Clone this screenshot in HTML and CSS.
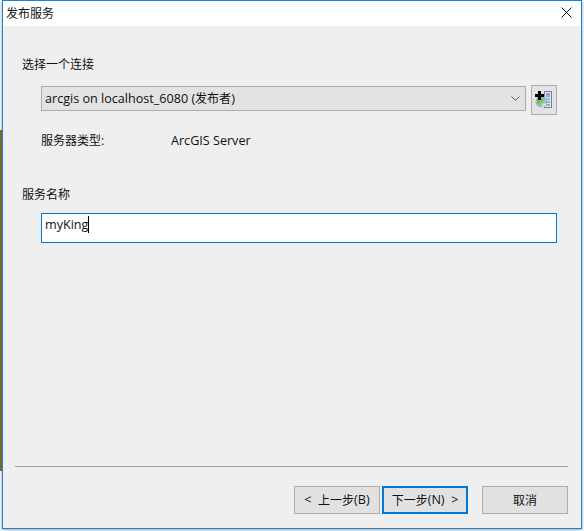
FILE: index.html
```html
<!DOCTYPE html>
<html>

<head>
	<meta http-equiv="Content-Type" content="text/html; charset=utf-8"/>
	<title>发布服务</title>
	<link rel="stylesheet" href="styles.css">
</head>

<body>
<div class="desktop"></div>
<div class="dialog">
	<div class="titlebar">
		<span class="title">发布服务</span>
		<svg class="close" width="11" height="11" viewBox="0 0 11 11">
			<path d="M0.5 0.5 L10.5 10.5 M10.5 0.5 L0.5 10.5" stroke="#111" stroke-width="1" fill="none"/>
		</svg>
	</div>
	<div class="content">
		<div class="label">选择一个连接</div>
		<div class="row">
			<div class="combo">
				<span class="latin">arcgis on localhost_6080 (<span class="cjk">发布者</span>)</span>
				<svg width="9" height="5" viewBox="0 0 9 5">
					<path d="M0.5 0.5 L4.5 4.5 L8.5 0.5" stroke="#555" stroke-width="1" fill="none"/>
				</svg>
			</div>
			<div class="icon-button">
				<svg width="18" height="18" viewBox="0 0 18 18">
					<rect x="9.5" y="0.5" width="7" height="16" fill="#dfe1f2" stroke="#767db0"/>
					<path d="M11 3 H15 M11 5 H15" stroke="#5e6598"/>
					<path d="M11 8 H15 M11 11 H15" stroke="#5aa05a"/>
					<path d="M11 14 H15" stroke="#5e6598"/>
					<circle cx="6.5" cy="10.5" r="6" fill="#8cc0d8"/>
					<path d="M2 8 Q6 5 8 8 Q10 11 6 11 Q5 15 2 13 Z" fill="#8fb84f"/>
					<path d="M7 13 Q10 11 12 13 Q9 17 7 16 Z" fill="#e6dc9a"/>
					<path d="M3 0 H6 V3 H9 V6 H6 V9 H3 V6 H0 V3 H3 Z" fill="#000"/>
				</svg>
			</div>
		</div>
		<div class="info">
			<span class="info-key">服务器类型:</span>
			<span class="latin">ArcGIS Server</span>
		</div>
		<div class="label name-label">服务名称</div>
		<div class="name-input"><span class="latin">myKing</span><i class="caret"></i></div>
		<div class="spacer"></div>
		<div class="separator"></div>
		<div class="buttons">
			<div class="btn latin">&lt;&nbsp; <span class="cjk">上一步</span>(B)</div>
			<div class="btn btn-default latin"><span class="cjk">下一步</span>(N)&nbsp; &gt;</div>
			<div class="btn btn-cancel">取消</div>
		</div>
	</div>
</div>
</body>

</html>
```

FILE: styles.css
```css
html, body {
	margin: 0;
	height: 100%;
}

body {
	background-color: #fafafa;
	font-family: "Open Sans", "Noto Sans CJK SC", sans-serif;
	font-size: 12px;
	color: #111;
	overflow: hidden;
}

.latin {
	font-size: 12.6px;
}

.cjk {
	font-size: 12px;
}

/* bit of desktop visible at the left of the window */
.desktop {
	position: absolute;
	left: 0;
	top: 130px;
	width: 2px;
	height: 341px;
	background-color: #8a6d3b;
}

.dialog {
	position: relative;
	box-sizing: border-box;
	width: 580px;
	height: 529px;
	margin-left: 2px;
	border: 1px solid #1883d7;
	background-color: #efefef;
	box-shadow: 0 1px 3px rgba(0, 0, 0, 0.35);
	display: flex;
	flex-direction: column;
}

.titlebar {
	height: 25px;
	flex: none;
	background-color: #fff;
	display: flex;
	align-items: center;
	justify-content: space-between;
	padding: 0 9px 2px 3px;
	box-sizing: border-box;
}

.content {
	flex: 1;
	display: flex;
	flex-direction: column;
	padding: 0 12px 14px 19px;
}

.label {
	margin-top: 30px;
	line-height: 17px;
}

.name-label {
	margin-top: 37px;
}

.row {
	display: flex;
	gap: 5px;
	margin: 12px 12px 0 19px;
	align-items: flex-start;
}

.combo {
	flex: 1;
	box-sizing: border-box;
	height: 25px;
	margin-top: 1px;
	border: 1px solid #adadad;
	background-color: #e3e3e3;
	display: flex;
	align-items: center;
	justify-content: space-between;
	padding: 0 5px 1px 3px;
}

.icon-button {
	box-sizing: border-box;
	width: 26px;
	height: 30px;
	border: 1px solid #adadad;
	background-color: #e3e3e3;
	display: flex;
	align-items: center;
	justify-content: center;
}

.info {
	display: flex;
	align-items: center;
	margin: 17px 12px 0 19px;
	line-height: 17px;
}

.info-key {
	width: 130px;
}

.name-input {
	box-sizing: border-box;
	height: 30px;
	margin: 10px 12px 0 19px;
	border: 1px solid #0078d7;
	background-color: #fff;
	display: flex;
	align-items: center;
	padding: 0 0 8px 3px;
}

.caret {
	width: 1px;
	height: 17px;
	background-color: #000;
}

.spacer {
	flex: 1;
}

.separator {
	height: 1px;
	background-color: #a0a0a0;
	margin: 0 1px 0 -7px;
}

.buttons {
	display: flex;
	margin-top: 19px;
}

.btn {
	box-sizing: border-box;
	width: 86px;
	height: 28px;
	border: 1px solid #adadad;
	background-color: #e1e1e1;
	display: flex;
	align-items: center;
	justify-content: center;
	white-space: pre;
	margin-left: 2px;
	padding-bottom: 1px;
}

.btn:first-child {
	margin-left: 272px;
}

.btn-default {
	border: 2px solid #0078d7;
}

.btn-cancel {
	margin-left: 14px;
}
```
